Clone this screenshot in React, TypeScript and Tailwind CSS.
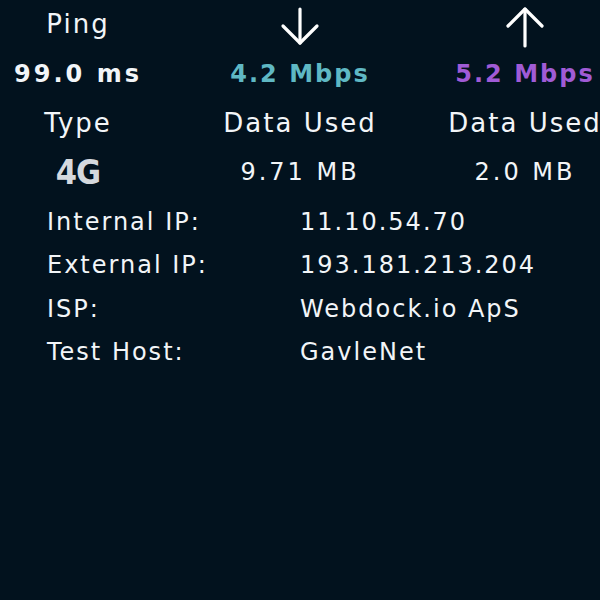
import React from 'react'

const ArrowDown = () => (
  <svg width="40" height="40" viewBox="0 0 40 40" fill="none" stroke="white" strokeWidth="3.2" strokeLinecap="round" strokeLinejoin="round">
    <path d="M20 2 V36" />
    <path d="M3 19 L20 36 L37 19" />
  </svg>
)

const ArrowUp = () => (
  <svg width="40" height="42" viewBox="0 0 40 42" fill="none" stroke="white" strokeWidth="3.2" strokeLinecap="round" strokeLinejoin="round">
    <path d="M20 3 V40" />
    <path d="M3 20 L20 3 L37 20" />
  </svg>
)

const info = [
  { label: 'Internal IP:', value: '11.10.54.70' },
  { label: 'External IP:', value: '193.181.213.204' },
  { label: 'ISP:', value: 'Webdock.io ApS' },
  { label: 'Test Host:', value: 'GavleNet' },
]

export default function App() {
  return (
    <div
      className="w-[600px] h-[600px] overflow-hidden bg-[#02121e] text-[#f2f5f8]"
      style={{ fontFamily: '"DejaVu Sans", sans-serif' }}
    >
      {/* stats grid */}
      <div className="grid grid-cols-[156px_288px_162px] text-center">
        <div className="h-[50px] flex items-center justify-center text-[26px] tracking-[2px] pb-[2px]">Ping</div>
        <div className="h-[50px] flex items-start justify-center pt-[7px]">
          <ArrowDown />
        </div>
        <div className="h-[50px] flex items-start justify-center pt-[6px] pr-[1px]">
          <ArrowUp />
        </div>

        <div className="h-[48px] flex items-center justify-center text-[24px] font-bold tracking-[3px]">99.0 ms</div>
        <div className="h-[48px] flex items-center justify-center text-[24px] font-bold tracking-[2px] text-[#5fb8c4]">4.2 Mbps</div>
        <div className="h-[48px] flex items-center justify-center text-[24px] font-bold tracking-[2px] text-[#a05bd6] whitespace-nowrap">5.2 Mbps</div>

        <div className="h-[50px] flex items-center justify-center text-[26px] tracking-[2px]">Type</div>
        <div className="h-[50px] flex items-center justify-center text-[26px] tracking-[2px] whitespace-nowrap">Data Used</div>
        <div className="h-[50px] flex items-center justify-center text-[26px] tracking-[2px] whitespace-nowrap">Data Used</div>

        <div
          className="h-[48px] flex items-center justify-center text-[34px] font-bold tracking-[-1px] text-[#d5d9de]"
          style={{ fontFamily: '"DejaVu Sans Condensed", "Liberation Sans Narrow", sans-serif' }}
        >
          4G
        </div>
        <div className="h-[48px] flex items-center justify-center text-[24px] tracking-[3px]">9.71 MB</div>
        <div className="h-[48px] flex items-center justify-center text-[24px] tracking-[3px]">2.0 MB</div>
      </div>

      {/* connection info */}
      <div className="mt-[4px] pl-[47px]">
        {info.map((row) => (
          <div key={row.label} className="h-[43.5px] flex items-center text-[24px] tracking-[2px]">
            <span className="w-[253px] shrink-0">{row.label}</span>
            <span>{row.value}</span>
          </div>
        ))}
      </div>
    </div>
  )
}
